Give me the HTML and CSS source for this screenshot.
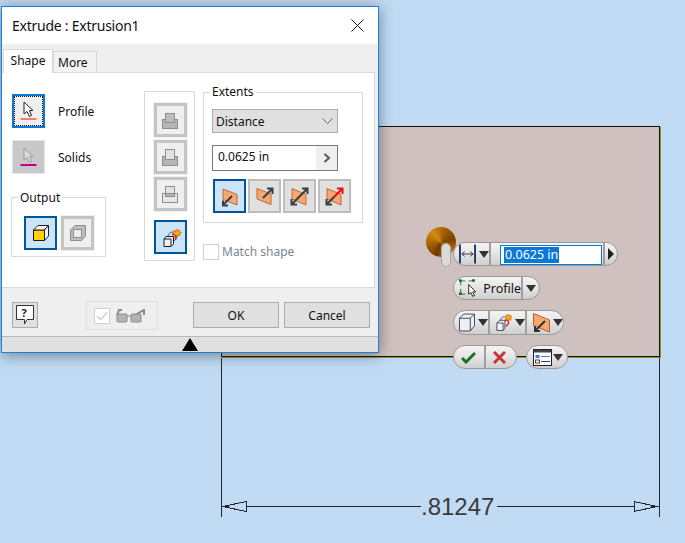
FILE: index.html
```html
<!DOCTYPE html>
<html lang="en">
<head>
<meta charset="utf-8">
<title>Extrude : Extrusion1</title>
<link rel="stylesheet" href="styles.css">
</head>
<body>
<svg width="0" height="0" class="defs">
  <defs>
    <symbol id="stack-a" viewBox="0 0 33 34">
      <rect x="8.500" y="16.500" width="15" height="9" fill="#b5b5b5" stroke="#8e8e8e"/>
      <rect x="11.500" y="10.500" width="9" height="9" fill="#bdbdbd" stroke="#8e8e8e"/>
    </symbol>
    <symbol id="stack-b" viewBox="0 0 33 34">
      <rect x="8.500" y="16.500" width="15" height="9" fill="#b5b5b5" stroke="#8e8e8e"/>
      <rect x="11.500" y="9.500" width="9" height="10" fill="#e2e2e2" stroke="#8e8e8e"/>
    </symbol>
    <symbol id="stack-c" viewBox="0 0 33 34">
      <rect x="8.500" y="16.500" width="15" height="9" fill="#e6e6e6" stroke="#8e8e8e"/>
      <rect x="11.500" y="9.500" width="9" height="7" fill="#e2e2e2" stroke="#8e8e8e"/>
      <rect x="11.500" y="16.500" width="9" height="3" fill="#b5b5b5" stroke="#8e8e8e"/>
    </symbol>
  </defs>
</svg>

<div class="part"></div>

<svg class="dimension" width="685" height="543" viewBox="0 0 685 543">
  <path d="M221.5 358V517M659.500 358V517" stroke="#20262c" fill="none"/>
  <path d="M222 506.500H421M497 506.500H659" stroke="#20262c" fill="none"/>
  <path class="crisp" d="M223 506.500L246 501.500V511.500Z" fill="#c1dbf4" stroke="#20262c"/>
  <path class="crisp" d="M657 506.500L634 501.500V511.500Z" fill="#c1dbf4" stroke="#20262c"/>
  <path d="M223 506.500L229 505V508Z M657 506.500L651 505V508Z" fill="#20262c"/>
</svg>
<div class="dim-value">.81247</div>

<div class="grip">
  <div class="ball"></div>
  <div class="handle"></div>
</div>

<div class="mini">
  <div class="mini-row">
    <div class="pill">
      <div class="seg seg-dim">
        <svg width="18" height="20" viewBox="0 0 18 20"><path d="M1 0V20M17 0V20" stroke="#1d3763" stroke-width="2" fill="none"/><path d="M3 10H15M6 7.500L3 10L6 12.500M12 7.500L15 10L12 12.500" stroke="#333" fill="none"/></svg>
        <span class="caret"></span>
      </div>
      <div class="seg seg-input"><span class="mini-input"><span class="sel">0.0625 in</span></span></div>
      <div class="seg seg-go"><span class="caret-right"></span></div>
    </div>
  </div>
  <div class="mini-row">
    <div class="pill">
      <div class="seg seg-profile">
        <svg class="profile-icon" width="24" height="20" viewBox="0 0 24 20"><path d="M2 2H17M2 2V17M2 17H9" stroke="#1c6b1c" stroke-dasharray="5 4" fill="none"/><path d="M0 0h3v3H0zM15 0h3v3h-3zM0 15h3v3H0z" fill="#176317"/><path d="M11 6V17L13.500 15L15.500 19.500L17.500 18.500L15.500 14.500H19Z" fill="#fff" stroke="#111"/></svg>
        <span class="mini-label">Profile</span>
      </div>
      <div class="seg seg-arrow"><span class="caret"></span></div>
    </div>
  </div>
  <div class="mini-row">
    <div class="pill">
      <div class="seg seg-icon">
        <svg width="17" height="19" viewBox="0 0 17 19"><path d="M.5 5L5 .5H16.500V13L12 18.500H.5Z" fill="#eef0f4" stroke="#33425e"/><path d="M.5 5H12V18.500M12 5L16.500 .5" fill="none" stroke="#33425e"/></svg>
        <span class="caret"></span>
      </div>
      <div class="seg seg-icon seg-new">
        <svg width="18" height="19" viewBox="0 0 18 19"><path d="M1 10L4 7H10V16L8 18.500H1Z" fill="#eef0f4" stroke="#33425e"/><path d="M1 10H8V18.500" fill="none" stroke="#33425e"/><path d="M5 7C6 3 9 2 11 4" fill="none" stroke="#2c54b4"/><path d="M10 7H14V11L11 14" fill="none" stroke="#e02020" stroke-width="1.500"/><path d="M14 0L15 2L17 1L16.500 3L18 4L16.500 5L17 7L15 6L14 8L13 6L11 7L11.500 5L10 4L11.500 3L11 1L13 2Z" fill="#f4b000" stroke="#e03000" stroke-width=".5"/></svg>
        <span class="caret"></span>
      </div>
      <div class="seg seg-icon seg-last">
        <svg width="17" height="20" viewBox="0 0 17 20"><path d="M.5 .5L16.500 7V19L.5 12.500Z" fill="#f6a873" stroke="#b5622c"/><path d="M12 8L2 18M2 13V18H7" stroke="#333" stroke-width="2" fill="none"/></svg>
        <span class="caret"></span>
      </div>
    </div>
  </div>
  <div class="mini-row mini-row-last">
    <div class="pill">
      <div class="seg seg-ok">
        <svg width="15" height="13" viewBox="0 0 15 13"><path d="M1 7L5 11L14 2" fill="none" stroke="#19702c" stroke-width="3"/></svg>
      </div>
      <div class="seg seg-no">
        <svg width="13" height="13" viewBox="0 0 13 13"><path d="M1 1L12 12M12 1L1 12" fill="none" stroke="#c4363a" stroke-width="3"/></svg>
      </div>
    </div>
    <div class="pill">
      <div class="seg seg-form">
        <svg width="19" height="17" viewBox="0 0 19 17"><rect x=".5" y=".5" width="18" height="16" fill="#fff" stroke="#222"/><path d="M1 1H18V3.500H1Z" fill="#444"/><path d="M2.500 6h4v3h-4z" fill="#3b82d8"/><path d="M8 7.500h9" stroke="#3b82d8"/><rect x="2.500" y="11" width="4" height="3" fill="#fff" stroke="#444"/><path d="M8 12.500h9" stroke="#444"/></svg>
        <span class="caret"></span>
      </div>
    </div>
  </div>
</div>

<section class="dialog">
  <header class="titlebar">
    <h1 class="title">Extrude : Extrusion1</h1>
    <svg class="close" width="13" height="13" viewBox="0 0 13 13"><path d="M.5 .5L12.500 12.500M12.500 .5L.5 12.500" stroke="#111" fill="none"/></svg>
  </header>
  <nav class="tabs">
    <span class="tab tab-active">Shape</span>
    <span class="tab tab-more">More</span>
  </nav>
  <div class="panel">
    <div class="col-left">
      <div class="pick-row">
        <button class="tool tool-focus">
          <svg width="24" height="24" viewBox="0 0 24 24"><path d="M7 3V15L10 12.500L12.500 17.500L14.500 16.500L12.500 11.500H16Z" fill="#fff" stroke="#222"/><path d="M3.500 20H19.500" stroke="#f87878" stroke-width="2"/></svg>
        </button>
        <span class="pick-label">Profile</span>
      </div>
      <div class="pick-row pick-row-2">
        <button class="tool tool-grey">
          <svg width="24" height="24" viewBox="0 0 24 24"><path d="M7 3V15L10 12.500L12.500 17.500L14.500 16.500L12.500 11.500H16Z" fill="#dcdcdc" stroke="#9a9a9a"/><path d="M3.500 20H19.500" stroke="#b8008f" stroke-width="2"/></svg>
        </button>
        <span class="pick-label">Solids</span>
      </div>
      <fieldset class="group output">
        <legend>Output</legend>
        <div class="output-row">
          <button class="tool tool-on">
            <svg width="18" height="18" viewBox="0 0 18 18"><path d="M1.500 6L1.500 16.500H12.500V6Z" fill="#ffd200" stroke="#1b1b33"/><path d="M1.500 6L6 1.500H16.500L12.500 6Z" fill="#fffbe6" stroke="#1b1b33"/><path d="M12.500 6L16.500 1.500V12L12.500 16.500Z" fill="#f6f6f6" stroke="#1b1b33"/></svg>
          </button>
          <button class="tool tool-off">
            <svg width="18" height="18" viewBox="0 0 18 18"><path d="M1.500 6L6 1.500H16.500V12L12.500 16.500H1.500Z" fill="#bdbdbd" stroke="#8e8e8e"/><rect x="4.500" y="5.500" width="8" height="8" fill="#ededed" stroke="#8e8e8e"/></svg>
          </button>
        </div>
      </fieldset>
    </div>

    <div class="col-mid">
      <button class="tool tool-off"><svg class="full" width="33" height="34"><use href="#stack-a"/></svg></button>
      <button class="tool tool-off"><svg class="full" width="33" height="34"><use href="#stack-b"/></svg></button>
      <button class="tool tool-off"><svg class="full" width="33" height="34"><use href="#stack-c"/></svg></button>
      <button class="tool tool-on tool-new">
        <svg width="22" height="22" viewBox="0 0 22 22"><path d="M4 13L6 10.500H13.500V18L11 20.500H4Z" fill="#f0f0f0" stroke="#1b1b33"/><path d="M4 13H11V20.500" fill="none" stroke="#1b1b33"/><path d="M8 10C9 6 13 5 16 7C18 9 17 13 14 15" fill="none" stroke="#2c54b4"/><path d="M12 8.500H15.500V14" fill="none" stroke="#e02020" stroke-width="1.500"/><path d="M17 3L18 5L20 4L19.500 6L21.500 7L19.500 8L20 10L18 9L17 11L16 9L14 10L14.500 8L12.500 7L14.500 6L14 4L16 5Z" fill="#f4b000" stroke="#e03000" stroke-width=".5"/></svg>
      </button>
    </div>

    <div class="col-right">
      <fieldset class="group extents">
        <legend>Extents</legend>
        <div class="select">
          <span>Distance</span>
          <svg width="11" height="6" viewBox="0 0 11 6"><path d="M.5 .5L5.500 5.500L10.500 .5" fill="none" stroke="#666"/></svg>
        </div>
        <div class="field">
          <span class="field-value">0.0625 in</span>
          <span class="field-btn"><svg width="8" height="10" viewBox="0 0 8 10"><path d="M1.500 1L6 5L1.500 9" fill="none" stroke="#555" stroke-width="2"/></svg></span>
        </div>
        <div class="dirs">
          <button class="tool tool-on dir">
            <svg class="full" width="33" height="34" viewBox="0 0 33 34"><path d="M10 10L24 15.500V26L10 20.500Z" fill="#f6a873" stroke="#c0682f"/><path d="M19 17L10 26M10 21.500V26.500H15" stroke="#3a3f44" stroke-width="2" fill="none"/></svg>
          </button>
          <button class="tool dir">
            <svg class="full" width="33" height="34" viewBox="0 0 33 34"><path d="M9 9.500L23 15V25.500L9 20Z" fill="#f6a873" stroke="#c0682f"/><path d="M15 19L24 10M19 9.500H24.500V15" stroke="#3a3f44" stroke-width="2" fill="none"/></svg>
          </button>
          <button class="tool dir">
            <svg class="full" width="33" height="34" viewBox="0 0 33 34"><path d="M9 9.500L23 15.500V26L9 20Z" fill="#f6a873" stroke="#c0682f"/><path d="M9 25L24 10M19 9.500H24.500V15M8.500 20V25.500H14" stroke="#3a3f44" stroke-width="2" fill="none"/></svg>
          </button>
          <button class="tool dir">
            <svg class="full" width="33" height="34" viewBox="0 0 33 34"><path d="M9 9.500L23 15.500V26L9 20Z" fill="#f6a873" stroke="#c0682f"/><path d="M9 25L16.500 17.500M8.500 20V25.500H14" stroke="#3a3f44" stroke-width="2" fill="none"/><path d="M16.500 17.500L24 10M19 9.500H24.500V15" stroke="#f40b0b" stroke-width="2" fill="none"/></svg>
          </button>
        </div>
      </fieldset>
      <div class="match">
        <span class="check"></span>
        <span>Match shape</span>
      </div>
    </div>
  </div>
  <footer class="footer">
    <button class="help">
      <svg width="18" height="20" viewBox="0 0 18 20"><path d="M.5 .5H17.500V14.500H11L8.500 19V14.500H.5Z" fill="#fff" stroke="#333"/><text x="5.500" y="12" class="help-mark">?</text></svg>
    </button>
    <div class="preview">
      <span class="check check-on">
        <svg width="12" height="10" viewBox="0 0 12 10"><path d="M1 5L4.500 8.500L11 1.500" fill="none" stroke="#cfcfcf" stroke-width="1.500"/></svg>
      </span>
      <svg width="30" height="14" viewBox="0 0 30 14"><path d="M1 6L3 1H6M19 6L28 1V6" fill="none" stroke="#8a8a8a" stroke-width="2"/><rect x="1" y="5" width="10" height="8" rx="1" fill="#b4b4b4" stroke="#8a8a8a"/><rect x="15" y="5" width="10" height="8" rx="1" fill="#b4b4b4" stroke="#8a8a8a"/><path d="M11 7H15" stroke="#8a8a8a"/></svg>
    </div>
    <div class="actions">
      <button class="action">OK</button>
      <button class="action">Cancel</button>
    </div>
  </footer>
  <div class="strip"><span class="triangle"></span></div>
</section>
</body>
</html>
```

FILE: styles.css
```css
* { box-sizing: border-box; }
html, body { margin: 0; height: 100%; }
body {
  width: 685px;
  height: 543px;
  position: relative;
  overflow: hidden;
  background: #c1dbf4;
  font-family: "Noto Sans", "Open Sans", sans-serif;
  font-size: 12px;
  color: #111;
}
.defs { position: absolute; }
button { font: inherit; color: inherit; padding: 0; margin: 0; }

/* canvas */
.part {
  position: absolute;
  left: 221px; top: 126px;
  width: 439px; height: 231px;
  background: #cfc1bf;
  border: 1px solid #111;
  box-shadow: 1px 1px 0 #8b9a1e;
}
.dimension { position: absolute; left: 0; top: 0; }
.crisp { shape-rendering: crispEdges; }
.dim-value {
  position: absolute;
  left: 421px; top: 492px;
  font-family: "Liberation Sans", sans-serif;
  font-size: 24px;
  line-height: 30px;
  color: #3a3a3c;
}

/* grip */
.grip { position: absolute; left: 426px; top: 227px; width: 32px; height: 42px; }
.ball {
  width: 30px; height: 30px; border-radius: 50%;
  background: conic-gradient(from 200deg, #6e3a00, #a86200, #d68a10, #a05c00, #7a4300, #c47a08, #6e3a00);
}
.handle {
  position: absolute; left: 15px; top: 16px;
  width: 10px; height: 24px; border-radius: 5px;
  background: #dadada; border: 1px solid #a8a8a8;
}

/* mini toolbar */
.mini {
  position: absolute; left: 453px; top: 242px;
  display: flex; flex-direction: column; gap: 10px; align-items: flex-start;
}
.mini-row { display: flex; height: 24px; }
.mini-row-last { gap: 9px; }
.mini-row:nth-child(3) { height: 25px; }
.pill {
  display: flex; height: 100%;
  border: 1px solid #9a9a9a; border-radius: 13px;
  overflow: hidden;
  background: linear-gradient(#f4f4f4, #e6e6e6 45%, #cfcfcf);
}
.seg {
  display: flex; align-items: center; justify-content: flex-start; gap: 3px;
  height: 100%;
  border-right: 2px solid #9f9f9f;
}
.seg:last-child { border-right: 0; }
.seg-dim { width: 37px; padding-left: 5px; }
.seg-input { width: 114px; justify-content: flex-end; padding-right: 1px; }
.mini-input {
  display: flex; align-items: center;
  width: 102px; height: 20px;
  margin-top: 1px;
  padding-left: 3px;
  background: #fff; border: 1px solid #0a78d7;
}
.sel { background: #0a78d7; color: #fff; font-size: 12.5px; line-height: 16px; padding: 0 1px; }
.seg-go { width: 12px; justify-content: center; }
.seg-profile { width: 69px; padding-left: 5px; gap: 4px; }
.mini-label { font-size: 12.5px; margin-left: -1px; }
.seg-arrow { width: 16px; justify-content: center; }
.seg-icon { width: 36px; padding-left: 5px; }
.seg-new { width: 37px; padding-left: 6px; }
.seg-last { width: 36px; padding-left: 6px; }
.seg-ok { width: 32px; padding-left: 7px; }
.seg-no { width: 30px; padding-left: 7px; }
.seg-form { width: 40px; padding-left: 6px; gap: 1px; }
.caret { width: 0; height: 0; border-left: 5px solid transparent; border-right: 5px solid transparent; border-top: 7px solid #333; }
.caret-right { width: 0; height: 0; border-top: 6px solid transparent; border-bottom: 6px solid transparent; border-left: 6px solid #222; }

/* dialog */
.dialog {
  position: absolute;
  left: 1px; top: 6px;
  width: 378px; height: 347px;
  display: flex; flex-direction: column;
  background: #efefef;
  border: 1px solid #1883d7;
  box-shadow: 0 2px 14px rgba(40, 50, 60, .55);
}
.titlebar {
  flex: none;
  height: 37px;
  background: #fff;
  display: flex; align-items: center; justify-content: space-between;
  padding: 0 14px 0 10px;
}
.title { margin: 0; font-size: 14px; font-weight: 400; line-height: 37px; letter-spacing: -.25px; }
.tabs { flex: none; height: 28px; display: flex; align-items: flex-end; padding-left: 1px; }
.tab {
  height: 21px;
  display: flex; align-items: center;
  background: #f2f2f2;
  border: 1px solid #d9d9d9; border-bottom: 0;
}
.tab-more { width: 44px; padding-left: 4px; }
.tab-active {
  width: 50px; height: 24px;
  justify-content: center;
  padding-bottom: 2px;
  background: #fff;
  margin-bottom: -1px;
  position: relative;
  z-index: 1;
}
.panel {
  flex: none;
  width: 373px; height: 216px;
  background: #fff;
  border: 1px solid #d9d9d9; border-left: 0;
  display: flex;
  padding: 18px 0 0 9px;
}
.col-left { width: 96px; margin-right: 37px; padding-top: 3px; }
.pick-row { display: flex; align-items: center; gap: 13px; padding-left: 1px; }
.pick-row-2 { margin-top: 12px; }
.pick-label { line-height: 16px; margin-top: 2px; }
.tool {
  width: 33px; height: 34px;
  display: flex; align-items: center; justify-content: center;
  background: #e0e0e0;
  border: 2px solid #bdbdbd;
  flex: none;
}
.tool-focus {
  background: #efefef;
  border: 2px solid #0a78d7;
  outline: 1px dotted #111; outline-offset: -3px;
}
.tool-grey { background: #c8c8c8; border: 1px solid #e4e4e4; }
.tool-on { background: #cce4f7; border: 2px solid #005499; }
.tool-off { background: #efefef; border: 3px solid #c4c4c4; outline: 1px solid #f0f0f0; }
.full { flex: none; margin: -3px; }
.dir .full { margin: -2px; }
.group { margin: 0; padding: 0; border: 1px solid #d9d9d9; min-width: 0; }
.group legend { padding: 0 2px; line-height: 16px; }
.output { margin-top: 14px; width: 95px; height: 69px; padding: 10px 0 0 12px; }
.output legend { margin-left: -6px; padding-top: 2px; }
.output-row { display: flex; gap: 4px; }
.col-mid {
  width: 51px; height: 170px; margin-right: 8px;
  border: 1px solid #d9d9d9;
  display: flex; flex-direction: column; align-items: center; gap: 3px;
  padding: 11px 0 0 2px;
}
.tool-new { margin-top: 6px; }
.col-right { width: 160px; }
.extents { width: 160px; height: 139px; margin-top: -7px; padding: 9px 0 0 8px; }
.extents legend { margin-left: -2px; }
.select {
  width: 126px; height: 24px;
  display: flex; align-items: center; justify-content: space-between;
  padding: 0 4px 0 3px;
  background: #e0e0e0; border: 1px solid #adadad;
}
.field {
  width: 126px; height: 26px; margin-top: 12px;
  display: flex; align-items: stretch;
  background: #fff; border: 1px solid #7a7a7a;
}
.field-value { flex: 1; padding-left: 5px; line-height: 22px; }
.field-btn { width: 21px; background: #efefef; display: flex; align-items: center; justify-content: center; }
.dirs { display: flex; gap: 2px; margin-top: 8px; margin-left: 1px; }
.dir { background: #e0e0e0; border: 2px solid #bdbdbd; }
.dir.tool-on { background: #cce4f7; border-color: #005499; }
.match { display: flex; align-items: center; gap: 3px; margin-top: 20px; color: #7d8590; }
.check { width: 16px; height: 16px; border: 1px solid #cfcfcf; background: #fff; display: flex; align-items: center; justify-content: center; flex: none; }
.footer { flex: none; height: 48px; display: flex; align-items: flex-start; padding: 14px 8px 0 10px; }
.help { width: 26px; height: 26px; display: flex; align-items: center; justify-content: center; background: #e0e0e0; border: 1px solid #adadad; flex: none; }
.help-mark { font-size: 11px; font-weight: 700; fill: #222; }
.preview {
  width: 72px; height: 29px; margin: -1px 0 0 48px;
  display: flex; align-items: center; gap: 6px; padding-left: 7px;
  border: 1px solid #dfdfdf;
}
.actions { display: flex; gap: 5px; margin-left: 35px; }
.action { width: 86px; height: 26px; background: #e0e0e0; border: 1px solid #adadad; }
.strip {
  flex: 1;
  background: #e0e0e0;
  border-top: 1px solid #b9b9b9;
  display: flex; justify-content: center; align-items: flex-end;
  padding-right: 1px;
}
.triangle { width: 0; height: 0; border-left: 8px solid transparent; border-right: 8px solid transparent; border-bottom: 13px solid #000; margin-left: 1px; margin-bottom: 1px; }
```
